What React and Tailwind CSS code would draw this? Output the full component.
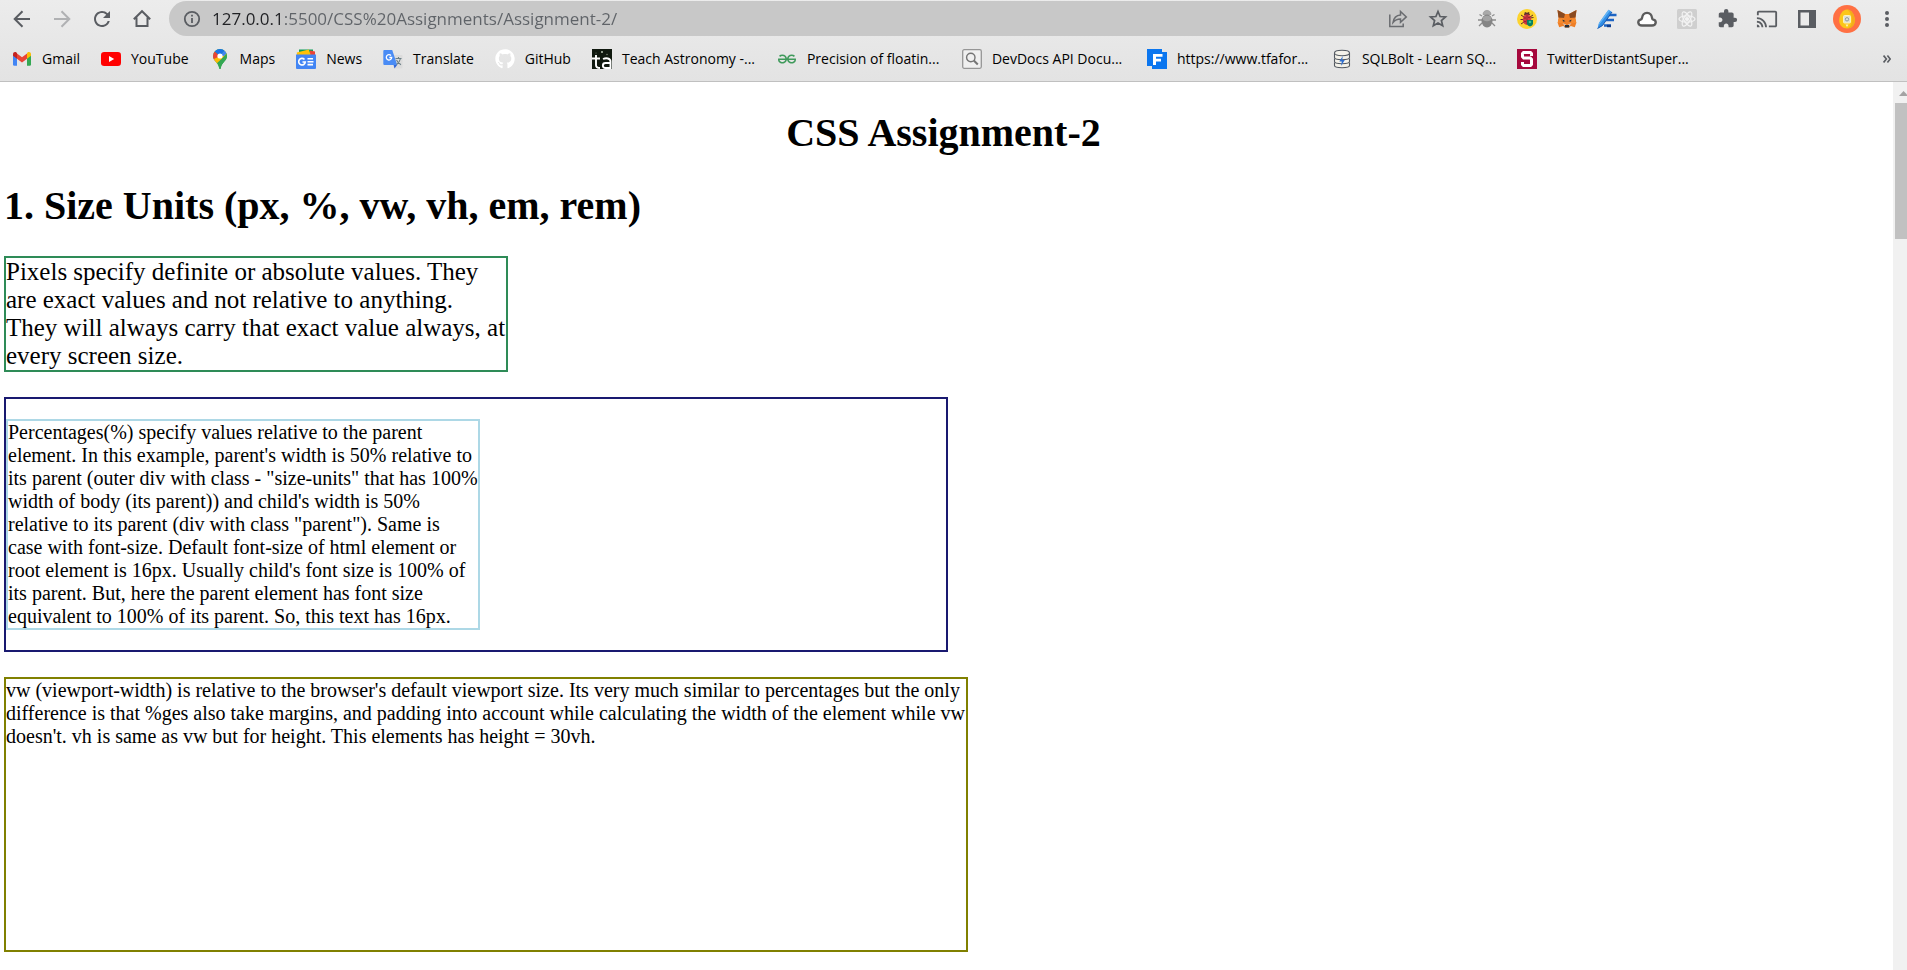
import React from "react";
import { FaGithub } from "react-icons/fa";
import { MdExtension, MdCast, MdRefresh } from "react-icons/md";
import { SiGeeksforgeeks } from "react-icons/si";

/* ---------- toolbar icons ---------- */

const BackIcon = () => (
  <svg viewBox="0 0 20 20" className="size-5" fill="none" stroke="#5a5d62" strokeWidth="2">
    <path d="M18 10H3M10.5 2.2 2.7 10l7.8 7.8" />
  </svg>
);

const ForwardIcon = () => (
  <svg viewBox="0 0 20 20" className="size-5" fill="none" stroke="#b0b1b3" strokeWidth="2">
    <path d="M2 10h15M9.5 2.2 17.3 10l-7.8 7.8" />
  </svg>
);

const HomeIcon = () => (
  <svg viewBox="0 0 20 20" className="size-5" fill="none" stroke="#5a5d62" strokeWidth="2">
    <path d="M1.8 10.2 10 2.2l8.2 8M4.5 8.5V17h11V8.5" />
  </svg>
);

const InfoIcon = () => (
  <svg viewBox="0 0 18 18" className="size-[18px]" fill="none" stroke="#5a5d62" strokeWidth="1.8">
    <circle cx="9" cy="9" r="7.2" />
    <path d="M9 8v5M9 4.8v1.8" />
  </svg>
);

const ShareIcon = () => (
  <svg viewBox="0 0 20 20" className="size-5" fill="none" stroke="#6a6c70" strokeWidth="1.5">
    <path d="M1.8 5.5v12h13.4v-3" />
    <path d="M5 13.5c.7-4.500 3-7.200 7.500-7.500V2.500l5.800 5.400-5.800 5.400V10c-3.500 0-5.600 1.200-7.500 3.500z" />
  </svg>
);

const StarIcon = () => (
  <svg viewBox="0 0 20 20" className="size-5" fill="none" stroke="#5a5d62" strokeWidth="1.7">
    <path d="m10 2.500 2.100 5 5.400.5-4.100 3.500 1.300 5.300L10 14l-4.700 2.800 1.300-5.300L2.500 8l5.400-.5z" />
  </svg>
);

const BugIcon = () => (
  <svg viewBox="0 0 20 20" className="size-5">
    <path d="M5 7 2.500 5.500M15 7l2.500-1.500M5 11H1M15 11h4M5 14l-3 3M15 14l3 3" stroke="#8c8c8c" strokeWidth="1.3" fill="none" />
    <path d="M6 5.500c0-5.500 8-5.500 8 0z" fill="#a9a9a9" stroke="#8c8c8c" strokeWidth=".6" />
    <ellipse cx="10" cy="12" rx="5.500" ry="6.500" fill="#858585" />
    <ellipse cx="10" cy="9.500" rx="4.200" ry="2.800" fill="#a3a3a3" />
  </svg>
);

const LadybugIcon = () => (
  <svg viewBox="0 0 20 20" className="size-5">
    <circle cx="10" cy="10" r="10" fill="#fdd32e" />
    <path d="m4 6 3 2M16 6l-3 2M3.500 10.500h3M4 15l3-2M13 9l3.500-.5M8 3l1 2M12 3l-1 2" stroke="#5b2a2a" strokeWidth="1" />
    <path d="M7 6c0-3.500 6-3.500 6 0z" fill="#59302e" />
    <ellipse cx="10" cy="10.500" rx="4.200" ry="5.300" fill="#d63a45" />
    <path d="M10 5.500v10" stroke="#8e2431" strokeWidth=".9" />
    <circle cx="8" cy="9" r=".8" fill="#7d2028" />
    <circle cx="8" cy="12.500" r=".8" fill="#7d2028" />
    <circle cx="12" cy="8.500" r=".8" fill="#7d2028" />
    <path d="M10 11h6v3.500c0 1.500-1.500 2.600-3 3-1.500-.4-3-1.500-3-3z" fill="#087f61" />
    <circle cx="13" cy="13" r="1.3" fill="#35c78d" />
  </svg>
);

const FoxIcon = () => (
  <svg viewBox="0 0 20 20" className="size-5">
    <path d="M.5 1 8 5h4l7.500-4-1 8 .8 5-1.500 4.300-4-1.300-2 1.500H8.200L6.200 17l-4 1.300L.7 14l.8-5z" fill="#ef7f27" />
    <path d="M.5 1 8 5l-1 4-5.500-.5zM19.500 1 12 5l1 4 5.500-.5z" fill="#8a4a20" />
    <path d="m7 9-5.500 1L.7 14h5zM13 9l5.500 1 .8 4h-5z" fill="#f58a2e" />
    <path d="m5.500 14 2.700 4 1-2.500zM14.500 14l-2.700 4-1-2.500z" fill="#d8c0ae" />
    <path d="m5.500 10.500 3 1.700-2.500.3zM14.500 10.500l-3 1.700 2.500.3zM8 16h4l.3 2.500H7.700z" fill="#25303c" />
  </svg>
);

const QuillIcon = () => (
  <svg viewBox="0 0 20 20" className="size-5">
    <path d="M10 6h9.500M9 11h8M7 16.500h7" stroke="#1c64c4" strokeWidth="2.6" />
    <path d="M10 17h4" stroke="#123f8e" strokeWidth="2.4" />
    <path d="M11.500.8 15 3 5.500 16.500.5 19.500 2 14z" fill="#2f8de6" />
    <path d="M11.500.8 2 14l-.8 3L13 1.800z" fill="#63b4f5" />
    <path d="M15 3 5.500 16.500.5 19.500" stroke="#1656ad" strokeWidth="1" fill="none" />
  </svg>
);

const CloudIcon = () => (
  <svg viewBox="0 0 20 20" className="size-5">
    <path
      d="M5 16.500c-4.500 0-4.800-5-1.300-5.900.8-.2 1-.4 1.200-1.300C5.900 2 14.200 2 15.200 9.300c.1.900.4 1.100 1.100 1.300 3.500.9 3.200 5.900-1.300 5.900z"
      fill="#fff"
      stroke="#5c5c5c"
      strokeWidth="2.4"
    />
  </svg>
);

const AtomIcon = () => (
  <svg viewBox="0 0 20 20" className="size-5" fill="none" stroke="#f3f3f3" strokeWidth="1.2">
    <rect width="20" height="20" rx="1.500" fill="#cfcfcf" stroke="none" />
    <ellipse cx="10" cy="10" rx="8" ry="3.200" />
    <ellipse cx="10" cy="10" rx="8" ry="3.200" transform="rotate(60 10 10)" />
    <ellipse cx="10" cy="10" rx="8" ry="3.200" transform="rotate(120 10 10)" />
    <circle cx="10" cy="10" r="1.500" fill="#f3f3f3" />
  </svg>
);

const SidePanelIcon = () => (
  <svg viewBox="0 0 18 18" className="size-[18px]">
    <path d="M0 0h18v18H0z" fill="#5a5d62" />
    <path d="M2.500 2.500H11v13H2.500z" fill="#ebebeb" />
  </svg>
);

const AvatarIcon = () => (
  <svg viewBox="0 0 28 28" className="size-7">
    <circle cx="14" cy="14" r="14" fill="#ff7043" />
    <path d="M14 4.500c4.500 0 7.800 5.500 7.800 11 0 4.800-3.500 8-7.800 8s-7.800-3.200-7.800-8c0-5.500 3.300-11 7.800-11z" fill="#fbc618" />
    <path d="M14 4.500c4.500 0 7.800 5.500 7.800 11 0 4.800-3.500 8-7.800 8 3-1 5-4 5-8.500S17 6.500 14 4.500z" fill="#f3ad1b" />
    <rect x="10.500" y="10.500" width="7" height="7.500" rx="1" fill="#dfe1d5" stroke="#fff3b8" strokeWidth="1" />
    <circle cx="14" cy="14.300" r="1.700" fill="none" stroke="#8f9aa0" strokeWidth="1" />
    <path d="M12.500 19.500h3L14 22z" fill="#fff3b8" />
  </svg>
);

const DotsIcon = () => (
  <svg viewBox="0 0 4 18" className="h-[18px] w-1" fill="#5a5d62">
    <circle cx="2" cy="3" r="2" />
    <circle cx="2" cy="9" r="2" />
    <circle cx="2" cy="15" r="2" />
  </svg>
);

/* ---------- bookmark icons ---------- */

const GmailIcon = () => (
  <svg viewBox="0 0 20 20" className="size-5">
    <path d="M1 5.500v10c0 .8.500 1.200 1.200 1.200H5V8.500z" fill="#4285f4" />
    <path d="M15 8.500v8.200h2.800c.7 0 1.200-.4 1.200-1.200v-10z" fill="#34a853" />
    <path d="M5 4.500 10 8.300l5-3.800v5.300l-5 3.800-5-3.800z" fill="#ea4335" />
    <path d="M1 5.200c0-2 2-2.800 3.400-1.700l.6.500v5.800L1 6.800z" fill="#c5221f" />
    <path d="M19 5.200c0-2-2-2.800-3.400-1.700L15 4v5.800l4-3z" fill="#fbbc04" />
  </svg>
);

const YouTubeIcon = () => (
  <svg viewBox="0 0 20 20" className="size-5">
    <rect y="3" width="20" height="14" rx="3.200" fill="#f00" />
    <path d="m8 7 5.200 3L8 13z" fill="#fff" />
  </svg>
);

const MapsIcon = () => (
  <svg viewBox="0 0 20 20" className="size-5">
    <clipPath id="pin">
      <path d="M10 0a7 7 0 0 1 7 7c0 5-5.500 6.500-6.200 12.200-.1 1-1.500 1-1.600 0C8.500 13.500 3 12 3 7a7 7 0 0 1 7-7z" />
    </clipPath>
    <g clipPath="url(#pin)">
      <path d="M0 0h20v20H0z" fill="#34a853" />
      <path d="M10 7 4.600 2.300 0 7v3l5 3.200z" fill="#ea4335" />
      <path d="M10 7 15 2l2 3-11 10-4-4z" fill="#fbbc04" />
      <path d="m10 7-5.500-4.700L8-1h5l1.500 2.500z" fill="#1a73e8" />
      <path d="m10 7 4.500-5.500L17 4l-3 3z" fill="#4285f4" />
      <path d="M17.500 3.500 7 15.500V20h11z" fill="#34a853" />
    </g>
    <circle cx="10" cy="7" r="2.600" fill="#fff" />
  </svg>
);

const NewsIcon = () => (
  <svg viewBox="0 0 20 20" className="size-5">
    <path d="M3 .5h14V6H3z" fill="#0c9d58" />
    <path d="m14 1.500 5 1V7h-5z" fill="#ea4335" />
    <path d="m.8 3.500 12-3L15 7H1z" fill="#ffc107" />
    <path d="M0 5.500h20V19a1 1 0 0 1-1 1H1a1 1 0 0 1-1-1z" fill="#4285f4" />
    <path d="M8.500 10.500A3.300 3.300 0 1 0 9.300 13H6.500M11.500 9.800H17M11.500 12.700h6M11.500 15.600H17" stroke="#fff" strokeWidth="1.6" fill="none" />
  </svg>
);

const TranslateIcon = () => (
  <svg viewBox="0 0 20 20" className="size-5">
    <path d="M8 6h10.500c.6 0 1 .4 1 1v11.500c0 .6-.4 1-1 1H11z" fill="#dcdcdc" />
    <path d="M10.500 15.500h4l-3 4z" fill="#3367d6" />
    <path d="M1.200 1h8l5 15H1.500C.9 16 .3 15.500.3 15V2c0-.6.400-1 .9-1z" fill="#4a8cf5" />
    <path d="M8 6.500a2.700 2.700 0 1 0 .7 2H6.300" stroke="#fff" strokeWidth="1.3" fill="none" />
    <path d="M12.500 9.500h6M15.500 8v1.500M17.500 9.500c-.5 2.500-2 4.500-4 6M13.500 11c1 2 2.500 3.700 4.500 4.700" stroke="#6b7f86" strokeWidth="1.1" fill="none" />
  </svg>
);

const AstronomyIcon = () => (
  <svg viewBox="0 0 20 20" className="size-5">
    <path d="M0 0h20v20H0z" fill="#10190f" />
    <circle cx="10" cy="3" r="1" fill="#b9c4b3" />
    <circle cx="15" cy="5.500" r=".7" fill="#87917f" />
    <circle cx="4" cy="4" r=".6" fill="#6d7868" />
    <path d="M4 6v10c0 2 1 3 4 3M0 9.500h8M11 10c3-1.300 7.500-1 7.500 2.500V20M18.500 14h-5c-3.500 0-3.500 5 0 5h5" stroke="#fff" strokeWidth="1.9" fill="none" />
  </svg>
);

const DevDocsIcon = () => (
  <svg viewBox="0 0 20 20" className="size-5" fill="none">
    <rect x=".7" y=".7" width="18.600" height="18.600" rx="1.500" fill="#f0f0f0" stroke="#969696" strokeWidth="1.3" />
    <circle cx="8.800" cy="8.500" r="4.200" stroke="#757575" strokeWidth="1.4" />
    <path d="m11.800 11.500 4 4" stroke="#757575" strokeWidth="2" />
  </svg>
);

const FormIcon = () => (
  <svg viewBox="0 0 20 20" className="size-5">
    <path d="M0 0h15v3h5v17H5v-3H0z" fill="#0b76ef" />
    <path d="M6 16V5h9.500v2.800H9v2h5v2.700H9V16z" fill="#fff" />
  </svg>
);

const DatabaseIcon = () => (
  <svg viewBox="0 0 20 20" className="size-5" fill="#f4f2ea" stroke="#525860" strokeWidth="1.1">
    <path d="M2.500 13.500v3c0 3 15 3 15 0v-3" />
    <path d="M2.500 9.500v3c0 3 15 3 15 0v-3" />
    <path d="M2.500 4v4.500c0 3 15 3 15 0V4" />
    <ellipse cx="10" cy="4" rx="7.500" ry="2.700" />
    <path d="m10.800 7-3.500 5.500h2.500L9 17l3.800-6h-2.600z" fill="#2f6fd0" stroke="none" />
  </svg>
);

const StanfordIcon = () => (
  <svg viewBox="0 0 20 20" className="size-5">
    <path d="M0 0h20v20H0z" fill="#a6093d" />
    <path
      d="M14.500 7V4.500l-1-1h-7l-1 1v3.200l1.200 1.300h6.600l1.200 1.300v5.200l-1 1h-7l-1-1V13"
      fill="none"
      stroke="#fff"
      strokeWidth="3"
    />
  </svg>
);

const extensions = [
  { name: "Bug reporter", icon: <BugIcon /> },
  { name: "Ladybug", icon: <LadybugIcon /> },
  { name: "Fox wallet", icon: <FoxIcon /> },
  { name: "Quill", icon: <QuillIcon /> },
  { name: "Cloud", icon: <CloudIcon /> },
  { name: "Developer tools", icon: <AtomIcon /> },
  { name: "Extensions", icon: <MdExtension className="size-[21px] text-[#5a5d62]" /> },
  { name: "Cast", icon: <MdCast className="size-[22px] text-[#5a5d62]" /> },
  { name: "Side panel", icon: <SidePanelIcon /> },
  { name: "Profile", icon: <AvatarIcon /> },
  { name: "Menu", icon: <DotsIcon /> },
];

const bookmarks = [
  { label: "Gmail", icon: <GmailIcon /> },
  { label: "YouTube", icon: <YouTubeIcon /> },
  { label: "Maps", icon: <MapsIcon /> },
  { label: "News", icon: <NewsIcon /> },
  { label: "Translate", icon: <TranslateIcon /> },
  { label: "GitHub", icon: <FaGithub className="size-5 text-white" /> },
  { label: "Teach Astronomy -...", icon: <AstronomyIcon />, long: true },
  { label: "Precision of floatin...", icon: <SiGeeksforgeeks className="size-[18px] text-[#3f9a5b]" />, long: true },
  { label: "DevDocs API Docu...", icon: <DevDocsIcon />, long: true },
  { label: "https://www.tfafor...", icon: <FormIcon />, long: true },
  { label: "SQLBolt - Learn SQ...", icon: <DatabaseIcon />, long: true },
  { label: "TwitterDistantSuper...", icon: <StanfordIcon />, long: true },
];

function ToolButton({ name, children }) {
  return (
    <button type="button" aria-label={name} className="flex h-full w-10 shrink-0 items-center justify-center">
      {children}
    </button>
  );
}

function BrowserHeader() {
  return (
    <header className="border-b border-[#c0c0c0] bg-linear-to-b from-[#ececec] to-[#e3e3e3] pt-px font-['Open_Sans',sans-serif]">
      <div className="flex h-[35px] items-center">
        <nav className="flex h-full pr-[7px] pl-0.5">
          <ToolButton name="Back"><BackIcon /></ToolButton>
          <ToolButton name="Forward"><ForwardIcon /></ToolButton>
          <ToolButton name="Reload"><MdRefresh className="size-6 text-[#5a5d62]" /></ToolButton>
          <ToolButton name="Home"><HomeIcon /></ToolButton>
        </nav>
        <div className="flex h-full min-w-0 flex-1 items-center rounded-full bg-[#c8c8c8] pr-0.5 pl-3.5">
          <InfoIcon />
          <input
            type="text"
            aria-label="Address"
            defaultValue="127.0.0.1:5500/CSS%20Assignments/Assignment-2/"
            className="ml-[11px] h-full min-w-0 flex-1 bg-[linear-gradient(to_right,#202124_72px,#5f6368_72px)] bg-clip-text text-[17px] text-transparent outline-none"
          />
          <ToolButton name="Share"><ShareIcon /></ToolButton>
          <ToolButton name="Bookmark this page"><StarIcon /></ToolButton>
        </div>
        <div className="flex h-full pl-[7px]">
          {extensions.map((e) => (
            <ToolButton key={e.name} name={e.name}>{e.icon}</ToolButton>
          ))}
        </div>
      </div>
      <nav className="flex h-[45px] items-center pr-4 pl-3">
        {bookmarks.map((b) => (
          <a key={b.label} href="#" className="mr-[21px] flex shrink-0 items-center gap-2.5 text-sm text-black">
            <span className="flex size-5 items-center justify-center">{b.icon}</span>
            <span className={b.long ? "w-[134px] whitespace-nowrap" : "whitespace-nowrap"}>{b.label}</span>
          </a>
        ))}
        <button type="button" aria-label="More bookmarks" className="ml-auto">
          <svg viewBox="0 0 8 8" className="size-2" fill="none" stroke="#5a5d62" strokeWidth="1.6">
            <path d="m.6.600 2.800 3.400L.6 7.400M4.400.600 7.200 4 4.400 7.400" />
          </svg>
        </button>
      </nav>
    </header>
  );
}

export default function App() {
  return (
    <div className="flex min-h-screen flex-col bg-white">
      <BrowserHeader />
      <div className="flex flex-1">
        <main className="min-w-0 flex-1 pt-7 pr-2.5 pl-1 font-['Liberation_Serif',serif] text-xl leading-[23px] text-black">
          <h1 className="mb-[27px] text-center text-[40px] leading-[46px] font-bold">CSS Assignment-2</h1>
          <h1 className="mb-[27px] text-[40px] leading-[46px] font-bold">1. Size Units (px, %, vw, vh, em, rem)</h1>
          <section className="flex flex-col items-start gap-[25px]">
            <p className="w-[504px] border-2 border-[#2e8b57] text-[25px] leading-7">
              Pixels specify definite or absolute values. They are exact values and not relative to anything. They will
              always carry that exact value always, at every screen size.
            </p>
            <div className="w-[calc(50%+4px)] border-2 border-[#191970] py-5">
              <p className="w-[calc(50%+4px)] border-2 border-[#add8e6]">
                Percentages(%) specify values relative to the parent element. In this example, parent's width is 50%
                relative to its parent (outer div with class - "size-units" that has 100% width of body (its parent))
                and child's width is 50% relative to its parent (div with class "parent"). Same is case with font-size.
                Default font-size of html element or root element is 16px. Usually child's font size is 100% of its
                parent. But, here the parent element has font size equivalent to 100% of its parent. So, this text has
                16px.
              </p>
            </div>
            <p className="h-[275px] w-[964px] max-w-full border-2 border-[#808000]">
              vw (viewport-width) is relative to the browser's default viewport size. Its very much similar to
              percentages but the only difference is that %ges also take margins, and padding into account while
              calculating the width of the element while vw doesn't. vh is same as vw but for height. This elements has
              height = 30vh.
            </p>
          </section>
        </main>
        <div className="flex w-3.5 shrink-0 flex-col items-end overflow-hidden bg-[#f1f1f1] pt-[9px]" aria-hidden="true">
          <svg viewBox="0 0 8 5" className="h-[5px] w-2" fill="#a3a3a3">
            <path d="M0 5 4.500 0 8 3.500V5z" />
          </svg>
          <div className="mt-[7px] h-[136px] w-3 bg-[#c1c1c1]" />
        </div>
      </div>
    </div>
  );
}
